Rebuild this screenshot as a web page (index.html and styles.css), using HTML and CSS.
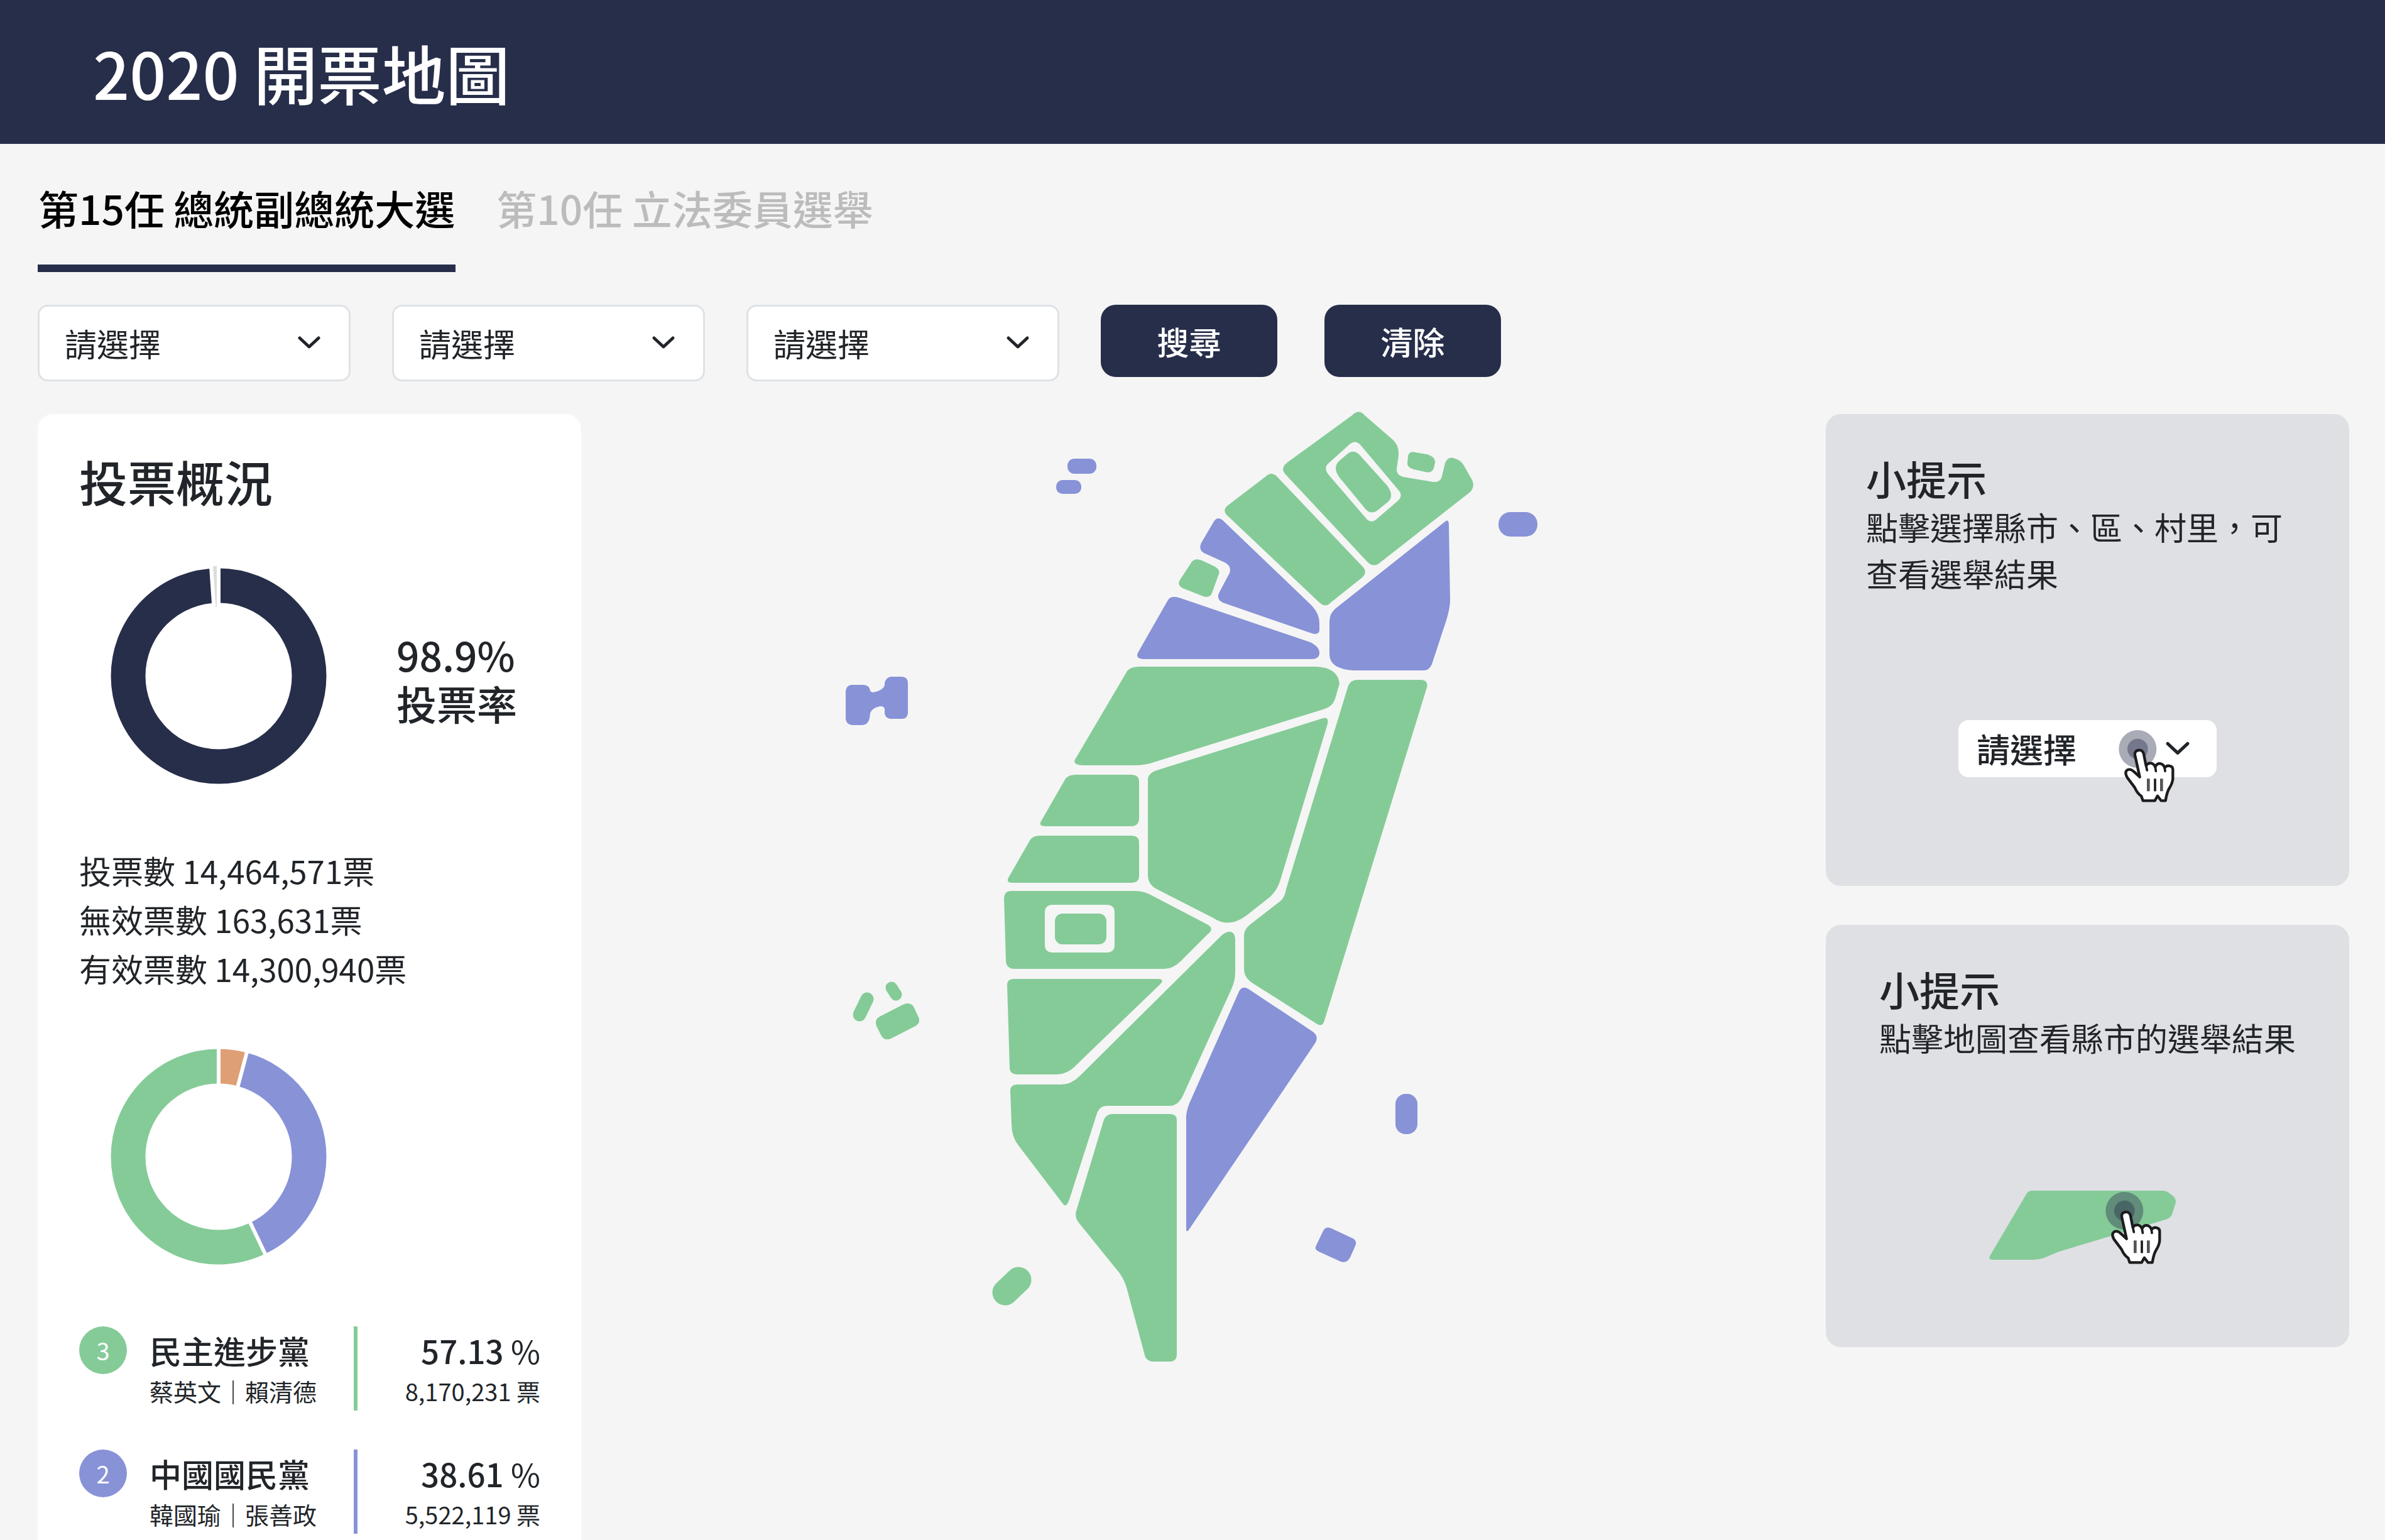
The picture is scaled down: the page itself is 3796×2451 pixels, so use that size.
FILE: index.html
```
<!DOCTYPE html>
<html lang="zh-Hant">
<head>
<meta charset="utf-8">
<meta name="viewport" content="width=device-width, initial-scale=1">
<title>2020 開票地圖</title>
<link rel="stylesheet" href="styles.css">
</head>
<body>
<svg class="defs" width="0" height="0" aria-hidden="true">
  <symbol id="chevron" viewBox="0 0 38 24">
    <path d="M4 4L19 18L34 4" fill="none" stroke="currentColor" stroke-width="5" stroke-linecap="round" stroke-linejoin="round"/>
  </symbol>
  <symbol id="pointer" viewBox="0 0 420 420">
    <circle cx="124" cy="126" r="90" fill="#272e4a" fill-opacity=".4"/>
    <circle cx="124" cy="126" r="49" fill="#272e4a" fill-opacity=".4"/>
    <path d="M134 260L112 160Q106 136 128 132Q148 130 153 150L164 206Q172 192 188 194Q202 197 208 212Q216 193 232 196Q248 199 253 216Q264 202 280 208Q294 212 292 230V268Q290 290 276 312Q264 330 257 373H236L219 350L206 373H149L142 352Q122 338 110 310L74 262Q60 238 74 227Q90 218 108 236Z" fill="#fff" stroke="#1c1c1e" stroke-width="13" stroke-linejoin="round"/>
    <path d="M164 206L169 228M208 212L211 232M253 216L255 232" stroke="#1c1c1e" stroke-width="11" stroke-linecap="round"/>
    <path d="M175 268V328M238 268V328" stroke="#555558" stroke-width="14"/>
    <path d="M207 268V328" stroke="#1c1c1e" stroke-width="11"/>
  </symbol>
</svg>

<header class="header"><h1 class="header-title">2020 開票地圖</h1></header>

<nav class="tabs" aria-label="選舉類別">
  <a class="tab tab-active" href="#president" aria-current="page">第15任 總統副總統大選</a>
  <a class="tab" href="#legislator">第10任 立法委員選舉</a>
</nav>

<form class="filters">
  <label class="select"><select class="select-box" aria-label="縣市"><option>請選擇</option></select><svg class="chevron" aria-hidden="true"><use href="#chevron"/></svg></label>
  <label class="select"><select class="select-box" aria-label="區"><option>請選擇</option></select><svg class="chevron" aria-hidden="true"><use href="#chevron"/></svg></label>
  <label class="select"><select class="select-box" aria-label="村里"><option>請選擇</option></select><svg class="chevron" aria-hidden="true"><use href="#chevron"/></svg></label>
  <div class="actions">
    <button class="button" type="button">搜尋</button>
    <button class="button" type="reset">清除</button>
  </div>
</form>

<main class="content">
  <section class="overview">
    <h2 class="overview-title">投票概況</h2>
    <div class="turnout">
      <svg class="donut" viewBox="-175 -175 350 350" aria-hidden="true">
        <circle r="144" fill="none" stroke="#272e4a" stroke-width="55"/>
        <path d="M0 -110V-180H-12.5L-7.6 -110Z" fill="#dcdde0"/>
        <path d="M0 -110V-180M-7.6 -110L-12.4 -180" stroke="#fff" stroke-width="6"/>
      </svg>
      <p class="turnout-rate">98.9%<br>投票率</p>
    </div>
    <p class="stats">投票數 14,464,571票<br>無效票數 163,631票<br>有效票數 14,300,940票</p>
    <svg class="donut donut-parties" viewBox="-175 -175 350 350" aria-hidden="true">
      <g fill="none" stroke-width="55">
        <circle r="144" pathLength="10000" transform="rotate(-90)" stroke="#de9f75" stroke-dasharray="426 9574"/>
        <circle r="144" pathLength="10000" transform="rotate(-90)" stroke="#8792d7" stroke-dasharray="3861 6139" stroke-dashoffset="-426"/>
        <circle r="144" pathLength="10000" transform="rotate(-90)" stroke="#85cb98" stroke-dasharray="5713 4287" stroke-dashoffset="-4287"/>
      </g>
      <path d="M0 -110V-180M29 -106L47 -174M47 98L78 163" stroke="#fff" stroke-width="6"/>
    </svg>
    <ol class="parties">
      <li class="party party-green">
        <span class="badge">3</span>
        <div><h3 class="party-name">民主進步黨</h3><p class="party-detail">蔡英文｜賴清德</p></div>
        <div class="result"><p class="share"><strong>57.13</strong> %</p><p class="party-detail">8,170,231 票</p></div>
      </li>
      <li class="party party-blue">
        <span class="badge">2</span>
        <div><h3 class="party-name">中國國民黨</h3><p class="party-detail">韓國瑜｜張善政</p></div>
        <div class="result"><p class="share"><strong>38.61</strong> %</p><p class="party-detail">5,522,119 票</p></div>
      </li>
    </ol>
  </section>

  <section class="map-area">
    <svg class="map" viewBox="17 18 1200 1520" role="img" aria-label="台灣開票地圖">
      <g fill="#85cb98">
        <path fill-rule="evenodd" d="M853 20Q864 9 873 20L918 59Q928 68 927 84L924 105Q923 115 934 118L982 126Q994 127 996 117L1001 96Q1006 84 1017 89Q1027 92 1031 100L1044 123Q1049 133 1041 142L898 254Q888 263 878 254L747 114Q738 104 750 95ZM847 68L817 95Q806 103 816 115L877 186Q884 192 891 186L926 156Q935 147 926 138L867 68Q858 57 847 68Z"/>
        <path d="M846 81L833 92Q821 103 833 119L875 170Q884 179 895 170L911 157Q920 147 909 132L864 82Q855 74 846 81Z"/>
        <path d="M942 86Q943 76 954 79L972 82Q986 86 985 96L983 104Q980 113 969 110L951 106Q940 103 941 95Z"/>
        <path d="M716 117L657 162Q644 171 656 181L801 318Q811 327 819 318L868 279Q879 270 869 260L733 117Q724 109 716 117Z"/>
        <path d="M596 256Q601 246 614 251L633 260Q645 266 640 275L631 300Q628 312 616 308L583 295Q574 290 579 282Z"/>
        <path d="M495 427Q501 420 514 420H795Q830 421 833 447L826 471Q822 484 807 488L541 571Q525 577 507 577H423Q408 576 412 568Z"/>
        <path d="M847 450Q851 441 862 441H962Q975 441 972 453L809 983Q806 995 796 988L695 924Q681 915 681 901V851Q680 839 690 831L739 793Q746 787 748 774Z"/>
        <path d="M807 502Q816 499 814 511L739 759Q735 774 723 786L685 816Q657 837 632 820L542 774Q528 767 528 751V600Q528 590 542 585Z"/>
        <path d="M397 598Q402 592 413 592H501Q514 592 514 603V661Q514 674 501 674H366Q353 674 358 666Z"/>
        <path d="M341 695Q346 689 356 689H501Q514 689 514 700V753Q514 764 501 764H312Q302 764 306 756Z"/>
        <path fill-rule="evenodd" d="M299 788Q300 777 310 777H508Q521 777 532 783L622 830Q635 837 623 846L580 889Q568 901 554 901H316Q302 901 302 887ZM377 799Q364 799 364 811V863Q364 875 377 875H462Q475 875 475 863V811Q475 799 462 799Z"/>
        <rect x="380" y="813" width="82" height="49" rx="12"/>
        <path d="M304 927Q304 917 314 917H543Q556 917 547 926L413 1055Q400 1069 381 1069H321Q308 1069 308 1058Z"/>
        <path d="M309 1096Q308 1085 322 1085H391Q406 1085 420 1071L640 853Q651 841 658 842Q667 842 667 856V906Q667 920 661 933L585 1100Q577 1119 563 1119H463Q450 1119 446 1134L403 1268Q398 1283 392 1274L322 1182Q311 1168 311 1148Z"/>
        <path d="M458 1141Q462 1132 472 1132H563Q574 1132 574 1142V1514Q574 1526 563 1526H537Q524 1526 522 1512L494 1408Q489 1391 477 1378L418 1305Q410 1295 415 1283Z"/>
        <path d="M322 1396L301 1416" fill="none" stroke="#85cb98" stroke-width="41" stroke-linecap="round"/>
        <path d="M81 949L69 974" fill="none" stroke="#85cb98" stroke-width="21" stroke-linecap="round"/>
        <path d="M120 931L127 942" fill="none" stroke="#85cb98" stroke-width="19" stroke-linecap="round"/>
        <path d="M101 977L138 958Q149 953 155 961L163 978Q167 987 158 992L119 1012Q109 1016 104 1008L96 992Q92 982 101 977Z"/>
      </g>
      <g fill="#8792d7">
        <path d="M633 189Q639 180 647 187L789 323Q801 336 801 351V363Q799 371 786 366L647 318Q637 313 641 303L658 271Q662 260 650 254L617 239Q608 233 613 223Z"/>
        <path d="M560 314Q565 306 580 311L786 381Q801 388 801 398Q801 408 788 408H520Q508 407 512 398Z"/>
        <path d="M1000 190Q1007 183 1007 195L1009 314Q1009 325 1004 343L981 413Q977 426 967 426H856Q817 424 817 400V348Q817 336 826 328Z"/>
        <path d="M673 937Q678 927 688 933L789 1000Q802 1008 793 1021L594 1315Q589 1322 589 1315V1142Q588 1130 594 1115Z"/>
        <rect x="400" y="89" width="46" height="24" rx="11"/>
        <rect x="382" y="123" width="40" height="22" rx="10"/>
        <rect x="1086" y="174" width="62" height="39" rx="19"/>
        <rect x="922" y="1100" width="35" height="64" rx="16"/>
        <path d="M807 1318Q811 1310 820 1314L852 1329Q862 1333 858 1342L850 1360Q845 1370 835 1367L800 1351Q792 1347 796 1341Z"/>
        <path d="M56 449H76Q85 450 86 458Q87 461 91 461Q106 458 109 450V446Q111 437 119 436H137Q146 437 146 446V494Q145 503 137 503H118Q110 502 109 494V487Q108 483 102 483Q88 486 86 494L85 502Q83 512 74 513H57Q48 512 47 503V459Q48 450 56 449Z"/>
      </g>
    </svg>
  </section>

  <aside class="tips">
    <section class="tip tip-select">
      <div class="tip-text"><h2 class="tip-title">小提示</h2><p class="tip-body">點擊選擇縣市、區、村里，可查看選舉結果</p></div>
      <div class="demo-select">請選擇<svg class="demo-chevron" aria-hidden="true"><use href="#chevron"/></svg><svg class="demo-pointer" aria-hidden="true"><use href="#pointer"/></svg></div>
    </section>
    <section class="tip tip-map">
      <div class="tip-text"><h2 class="tip-title">小提示</h2><p class="tip-body">點擊地圖查看縣市的選舉結果</p></div>
      <svg class="demo-map" viewBox="0 0 316 120" aria-hidden="true">
        <path d="M61 4Q64 0 70 0H276Q284 0 289 5Q299 11 298 19L292 38Q290 43 282 46L112 97L88 107Q80 110 72 110H5Q0 109 2 104Z" fill="#85cb98"/>
        <use href="#pointer" x="175" y="-10" width="140" height="140"/>
      </svg>
    </section>
  </aside>
</main>
</body>
</html>
```
FILE: styles.css
```
* {
  box-sizing: border-box;
}

body {
  margin: 0;
  min-height: 100vh;
  display: flex;
  flex-direction: column;
  background: #f5f5f5;
  color: #212529;
  font-family: "Noto Sans CJK TC", "Noto Sans", sans-serif;
  font-size: 51px;
}

h1, h2, h3, p, ol {
  margin: 0;
  padding: 0;
  font-weight: 400;
}

.defs {
  position: absolute;
}

.header {
  padding: 41px 148px;
  background: #272e4a;
  color: #fff;
}

.header-title {
  font-size: 102px;
  font-weight: 500;
  line-height: 147px;
}

.tabs {
  display: flex;
  gap: 64px;
  padding: 53px 60px 0;
}

.tab {
  padding: 0 1px 43px;
  border-bottom: 12px solid transparent;
  color: #bcbcbc;
  font-size: 64px;
  font-weight: 500;
  line-height: 96px;
  text-decoration: none;
}

.tab-active {
  border-color: #272e4a;
  color: #000;
}

.filters {
  display: flex;
  align-items: flex-start;
  gap: 66px;
  padding: 52px 60px;
}

.select {
  display: grid;
  align-items: center;
  width: 498px;
}

.select-box {
  grid-area: 1 / 1;
  appearance: none;
  height: 122px;
  padding: 0 40px;
  border: 3px solid #dee2e6;
  border-radius: 16px;
  background: #fff;
  color: #212529;
  font: inherit;
}

.chevron {
  grid-area: 1 / 1;
  justify-self: end;
  width: 38px;
  height: 24px;
  margin-right: 47px;
  pointer-events: none;
}

.actions {
  display: flex;
  gap: 75px;
}

.button {
  width: 281px;
  height: 115px;
  padding: 0;
  border: 0;
  border-radius: 24px;
  background: #272e4a;
  color: #fff;
  font: inherit;
  font-weight: 500;
}

.content {
  flex: 1;
  display: grid;
  grid-template-columns: 865px 1fr 833px;
  padding: 0 57px 0 60px;
}

.overview {
  padding: 51px 65px 0 66px;
  border-radius: 24px 24px 0 0;
  background: #fff;
}

.overview-title {
  font-size: 77px;
  font-weight: 500;
  line-height: 112px;
}

.turnout {
  display: flex;
  align-items: center;
  gap: 108px;
  margin-top: 79px;
}

.donut {
  display: block;
  width: 350px;
  height: 350px;
  margin-left: 47px;
}

.turnout-rate {
  padding-top: 8px;
  font-size: 64px;
  font-weight: 500;
  line-height: 77px;
}

.stats {
  margin-top: 95px;
  line-height: 78px;
}

.donut-parties {
  margin-top: 86px;
}

.parties {
  display: grid;
  gap: 62px;
  margin-top: 95px;
  list-style: none;
}

.party {
  display: grid;
  grid-template-columns: 76px 1fr 297px;
  height: 134px;
}

.party-green {
  --party: #85cb98;
}

.party-blue {
  --party: #8792d7;
}

.badge {
  width: 76px;
  height: 76px;
  border-radius: 50%;
  background: var(--party);
  color: #fff;
  font-size: 38px;
  line-height: 76px;
  text-align: center;
}

.party-name {
  font-size: 51px;
  font-weight: 500;
}

.party-name,
.share {
  line-height: 76px;
}

.party-name,
.party-detail {
  padding-left: 36px;
}

.party-detail {
  font-size: 38px;
  line-height: 54px;
}

.result {
  border-left: 6px solid var(--party);
  text-align: right;
}

.share strong {
  font-weight: 500;
}

.map {
  display: block;
  width: 100%;
  max-width: 1200px;
  margin: 0 auto;
  overflow: visible;
}

.tips {
  display: grid;
  align-content: start;
  justify-items: stretch;
  gap: 62px;
}

.tip {
  display: flex;
  flex-direction: column;
  align-items: center;
  padding: 60px 64px 0;
  border-radius: 24px;
  background: #dfe0e4;
}

.tip-title {
  font-size: 64px;
  font-weight: 500;
  line-height: 82px;
}

.tip-body {
  line-height: 74px;
}

.tip-select {
  padding-bottom: 173px;
}

.tip-map {
  padding-bottom: 129px;
}

.demo-select {
  position: relative;
  display: flex;
  align-items: center;
  justify-content: space-between;
  width: 411px;
  margin-top: 197px;
  padding: 0 42px 0 29px;
  border-radius: 16px;
  background: #fff;
  font-size: 53px;
  font-weight: 500;
  line-height: 91px;
}

.demo-chevron {
  width: 40px;
  height: 26px;
}

.demo-pointer {
  position: absolute;
  top: 4px;
  left: 244px;
  width: 140px;
  height: 140px;
}

.demo-map {
  width: 316px;
  height: 120px;
  margin-top: 207px;
  overflow: visible;
}
```
